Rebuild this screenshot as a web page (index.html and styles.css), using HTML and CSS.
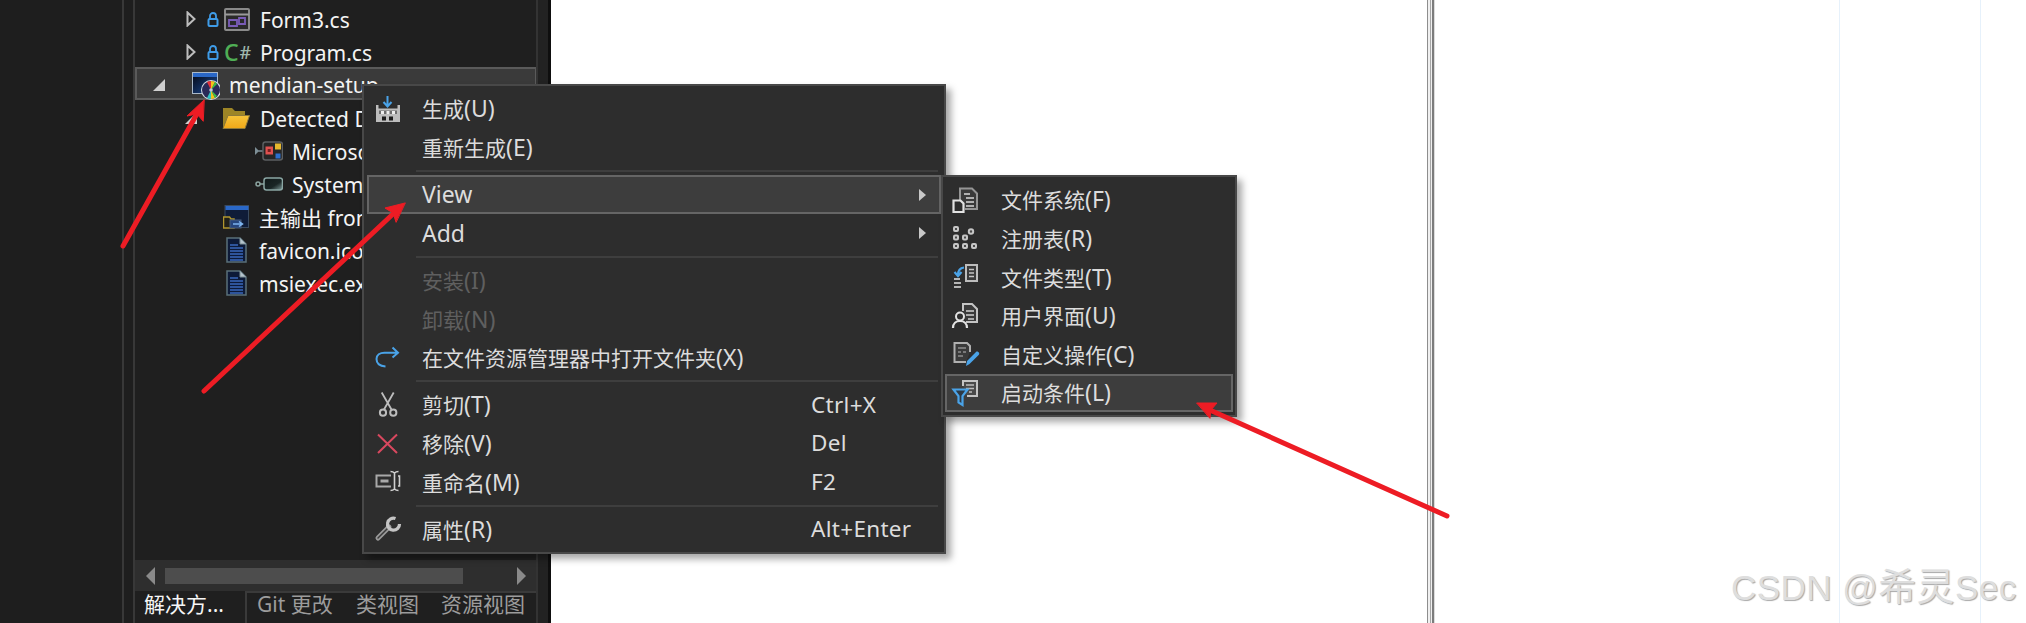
FILE: index.html
```html
<!DOCTYPE html>
<html lang="zh">
<head>
<meta charset="utf-8">
<title>mendian-setup</title>
<link rel="stylesheet" href="styles.css">
</head>
<body>
<div class="screen">
  <div class="gutter gutter-a"></div>
  <div class="gutter gutter-b"></div>
  <section class="panel">
    <div class="tree">
      <div class="row pad-file">
        <span class="slot s-chev"><svg width="10" height="16" viewBox="0 0 10 16"><path d="M1.5 1.5 8.5 8 1.5 14.5z" fill="none" stroke="#bdbdbd" stroke-width="2"/></svg></span>
        <span class="slot s-lock"><svg width="12" height="15" viewBox="0 0 12 15"><path d="M3 7V4a3 3 0 0 1 6 0v3" fill="none" stroke="#3f9ce8" stroke-width="1.8"/><rect x="1.5" y="7" width="9" height="7" rx="1" fill="none" stroke="#3f9ce8" stroke-width="2"/></svg></span>
        <span class="slot s-icon"><svg width="26" height="23" viewBox="0 0 26 23"><rect x="1" y="1" width="24" height="21" rx="1" fill="#2a2a2a" stroke="#8a8a8a" stroke-width="2"/><path d="M1 6.500h24" stroke="#9a9a9a" stroke-width="2"/><path d="M5 12h8v6H5zM15 10h6v6h-6z" fill="none" stroke="#7a5cb8" stroke-width="1.800"/></svg></span>
        <span class="name">Form3.cs</span>
      </div>
      <div class="row pad-file">
        <span class="slot s-chev"><svg width="10" height="16" viewBox="0 0 10 16"><path d="M1.5 1.5 8.5 8 1.5 14.5z" fill="none" stroke="#bdbdbd" stroke-width="2"/></svg></span>
        <span class="slot s-lock"><svg width="12" height="15" viewBox="0 0 12 15"><path d="M3 7V4a3 3 0 0 1 6 0v3" fill="none" stroke="#3f9ce8" stroke-width="1.8"/><rect x="1.5" y="7" width="9" height="7" rx="1" fill="none" stroke="#3f9ce8" stroke-width="2"/></svg></span>
        <span class="slot s-icon csharp"><b class="cs-c">C</b><b class="cs-h">#</b></span>
        <span class="name">Program.cs</span>
      </div>
      <div class="row row-selected pad-project">
        <span class="slot s-exp-p"><svg width="12" height="12" viewBox="0 0 12 12"><path d="M0 12 12 12 12 0z" fill="#cfcfcf"/></svg></span>
        <span class="slot s-proj"><svg width="28" height="30" viewBox="0 0 28 30"><defs><linearGradient id="scr" x1="0" y1="0" x2="1" y2="1"><stop offset="0" stop-color="#04060f"/><stop offset="1" stop-color="#1d4f9e"/></linearGradient></defs><rect x="0.500" y="2.500" width="25" height="21" fill="url(#scr)" stroke="#a9b8c8"/><rect x="1" y="3" width="24" height="4" fill="#2a68c8"/><circle cx="19" cy="20" r="10" fill="#d4dce4"/><circle cx="19" cy="20" r="9" fill="#2a2a58"/><path d="M19 20 15 12A9 9 0 0 1 19 11z" fill="#e6303a"/><path d="M19 20V11A9 9 0 0 1 23 12z" fill="#f1c21b"/><path d="M19 20 23 12A9 9 0 0 1 25 14z" fill="#3cc04a"/><path d="M19 20 15 28A9 9 0 0 0 19 29z" fill="#2ec4c4"/><path d="M19 20V29A9 9 0 0 0 23 28z" fill="#f1c21b"/><path d="M19 20 23 28A9 9 0 0 0 25 26z" fill="#3cc04a"/><circle cx="19" cy="20" r="1.800" fill="#bfc8d2"/></svg></span>
        <span class="name">mendian-setup</span>
      </div>
      <div class="row pad-dep">
        <span class="slot s-exp-d"><svg width="12" height="12" viewBox="0 0 12 12"><path d="M0 12 12 12 12 0z" fill="#cfcfcf"/></svg></span>
        <span class="slot s-folder"><svg width="28" height="22" viewBox="0 0 28 22"><defs><linearGradient id="fold" x1="0" y1="0" x2="0" y2="1"><stop offset="0" stop-color="#f6c43a"/><stop offset="1" stop-color="#f0a818"/></linearGradient></defs><path d="M1 1h9l3 3h10v5H6L1 21z" fill="#9d8526"/><path d="M6 8.500h21.500L23 21.500H1z" fill="url(#fold)" stroke="#8e7a3a"/></svg></span>
        <span class="name">Detected Dependencies</span>
      </div>
      <div class="row pad-asm">
        <span class="slot s-asm"><svg width="28" height="20" viewBox="0 0 28 20"><path d="M0 7l3 3-3 3zM3 10h5" fill="#7e8f96" stroke="#7e8f96" stroke-width="1.500"/><rect x="8" y="1" width="19.500" height="18" rx="2.500" fill="#262626" stroke="#5c5f61" stroke-width="1.500"/><rect x="10.500" y="5.500" width="7.500" height="8" fill="#e0514f"/><rect x="12.700" y="8" width="3" height="3" fill="#7a2020"/><rect x="20" y="2.500" width="6" height="6" fill="#e6b82e"/><rect x="20.500" y="12.500" width="5" height="5" fill="#2b6fcf"/></svg></span>
        <span class="name">Microsoft .NET Framework</span>
      </div>
      <div class="row pad-asm">
        <span class="slot s-asm"><svg width="28" height="14" viewBox="0 0 28 14"><defs><linearGradient id="sysb" x1="0" y1="0" x2="1" y2="1"><stop offset="0" stop-color="#101818"/><stop offset=".6" stop-color="#1a2626"/><stop offset="1" stop-color="#7f9c9a"/></linearGradient></defs><circle cx="3" cy="7" r="2" fill="none" stroke="#8aa39f" stroke-width="1.500"/><path d="M5 7h4" stroke="#8aa39f" stroke-width="1.500"/><rect x="9" y="1" width="18.500" height="12" rx="2.500" fill="url(#sysb)" stroke="#8aa6a4" stroke-width="1.500"/></svg></span>
        <span class="name">System.Windows.Forms</span>
      </div>
      <div class="row pad-output">
        <span class="slot s-out"><svg width="26" height="24" viewBox="0 0 26 24"><rect x="2" y="0.500" width="23.500" height="22" fill="#0f1c38" stroke="#3a4a5e"/><rect x="2.500" y="1" width="23" height="4" fill="#2a68c8"/><path d="M0.500 12h6l1.500 2h3v9H0.500z" fill="#20201a" stroke="#b0952e" stroke-width="1.500"/><rect x="7" y="15" width="11" height="8" fill="#27467e" stroke="#4a5d7a"/><path d="M10 19h9M16 16.500 19.500 19 16 21.500" fill="none" stroke="#7db4ef" stroke-width="1.500"/></svg></span>
        <span class="name"><span class="cjk">主输出</span> from mendian</span>
      </div>
      <div class="row pad-doc">
        <span class="slot s-doc"><svg width="21" height="26" viewBox="0 0 21 26"><path d="M1 1h13l6 6v18H1z" fill="#0d1a38" stroke="#59707a" stroke-width="1.500"/><path d="M14 1v6h6" fill="#b5c4cc" stroke="#7d8f96"/><path d="M4 8h8M4 11h13M4 14h13M4 17h13M4 20h13M4 23h13" stroke="#3a68bc" stroke-width="1.600"/></svg></span>
        <span class="name">favicon.ico</span>
      </div>
      <div class="row pad-doc">
        <span class="slot s-doc"><svg width="21" height="26" viewBox="0 0 21 26"><path d="M1 1h13l6 6v18H1z" fill="#0d1a38" stroke="#59707a" stroke-width="1.500"/><path d="M14 1v6h6" fill="#b5c4cc" stroke="#7d8f96"/><path d="M4 8h8M4 11h13M4 14h13M4 17h13M4 20h13M4 23h13" stroke="#3a68bc" stroke-width="1.600"/></svg></span>
        <span class="name">msiexec.exe</span>
      </div>
    </div>
    <div class="hscroll">
      <svg class="sb-arrow" width="9" height="18" viewBox="0 0 9 18"><path d="M9 0v18L0 9z" fill="#8a8a8a"/></svg>
      <div class="sb-track"><div class="sb-thumb"></div></div>
      <svg class="sb-arrow" width="9" height="18" viewBox="0 0 9 18"><path d="M0 0v18L9 9z" fill="#8a8a8a"/></svg>
    </div>
    <div class="tabs">
      <span class="tab tab-active">解决方...</span>
      <div class="tab-rest">
        <span class="tab tab-git">Git 更改</span>
        <span class="tab tab-cls">类视图</span>
        <span class="tab tab-res">资源视图</span>
      </div>
    </div>
  </section>
  <div class="panel-edge"></div>
  <main class="doc">
    <div class="doc-left"></div>
    <div class="splitter"></div>
    <div class="doc-col doc-col-a"></div>
    <div class="doc-col doc-col-b"></div>
    <div class="doc-col doc-col-c"></div>
  </main>
</div>

<nav class="menu menu-main">
  <div class="item">
    <span class="ico"><svg width="26" height="26" viewBox="0 0 26 26"><path d="M1 9h2.500v3.500h19V9H25v17H1z" fill="#bdbdbd"/><path d="M12.500 0v9M8.500 6l4 4.500 4-4.500" fill="none" stroke="#4aa3e8" stroke-width="2"/><path d="M4 14.500h18v3.500H4z" fill="#6d6d6d"/><path d="M6 15h3v3H6zM11.500 15h3v3h-3zM17 15h3v3h-3z" fill="#ededed"/><path d="M7 20.500h4v4H7zM14 20.500h4v4h-4z" fill="#1d1d1d"/></svg></span>
    <span class="label">生成<span class="key">(U)</span></span><span class="end"></span>
  </div>
  <div class="item">
    <span class="ico"></span>
    <span class="label">重新生成<span class="key">(E)</span></span><span class="end"></span>
  </div>
  <div class="sep"></div>
  <div class="item item-hot">
    <span class="ico"></span>
    <span class="label key">View</span>
    <span class="end end-arrow"><svg width="7" height="12" viewBox="0 0 7 12"><path d="M0 0l7 6-7 6z" fill="#c8c8c8"/></svg></span>
  </div>
  <div class="item">
    <span class="ico"></span>
    <span class="label key">Add</span>
    <span class="end end-arrow"><svg width="7" height="12" viewBox="0 0 7 12"><path d="M0 0l7 6-7 6z" fill="#c8c8c8"/></svg></span>
  </div>
  <div class="sep"></div>
  <div class="item item-off">
    <span class="ico"></span>
    <span class="label">安装<span class="key">(I)</span></span><span class="end"></span>
  </div>
  <div class="item item-off">
    <span class="ico"></span>
    <span class="label">卸载<span class="key">(N)</span></span><span class="end"></span>
  </div>
  <div class="item">
    <span class="ico"><svg width="26" height="26" viewBox="0 0 26 26"><path d="M10.500 21.500C4 21 1.500 17.500 1.500 14 1.500 10 5 7.700 9.500 7.700H22.500M17.500 2.500 23 7.700 17.500 12.500" fill="none" stroke="#4aa3e8" stroke-width="2"/></svg></span>
    <span class="label">在文件资源管理器中打开文件夹<span class="key">(X)</span></span><span class="end"></span>
  </div>
  <div class="sep"></div>
  <div class="item">
    <span class="ico"><svg width="26" height="26" viewBox="0 0 26 26"><path d="M6.700 .5 16.500 17.500M18.700 .5 9 17.500" fill="none" stroke="#bdbdbd" stroke-width="1.800"/><circle cx="8" cy="20.700" r="3.100" fill="none" stroke="#bdbdbd" stroke-width="2"/><circle cx="18.300" cy="20.700" r="3.100" fill="none" stroke="#bdbdbd" stroke-width="2"/></svg></span>
    <span class="label">剪切<span class="key">(T)</span></span><span class="end">Ctrl+X</span>
  </div>
  <div class="item">
    <span class="ico"><svg width="26" height="26" viewBox="0 0 26 26"><path d="M3 3.500 22 22M22 3.500 3 22" fill="none" stroke="#d9485f" stroke-width="2"/></svg></span>
    <span class="label">移除<span class="key">(V)</span></span><span class="end">Del</span>
  </div>
  <div class="item">
    <span class="ico"><svg width="26" height="26" viewBox="0 0 26 26"><path d="M16 6.500H1.500v11H16" fill="none" stroke="#a8a8a8" stroke-width="2"/><path d="M5.500 10.500h8v3h-8z" fill="#a8a8a8"/><path d="M15.500 2.500c2 0 3 .5 4 1.500 1-1 2-1.500 4-1.500M19.500 4v16M15.500 21.500c2 0 3-.5 4-1.500 1 1 2 1.500 4 1.500M23 7h1.500v10H23" fill="none" stroke="#d0d0d0" stroke-width="1.600"/></svg></span>
    <span class="label">重命名<span class="key">(M)</span></span><span class="end">F2</span>
  </div>
  <div class="sep"></div>
  <div class="item">
    <span class="ico"><svg width="26" height="26" viewBox="0 0 26 26"><path d="M3 22 14 11" stroke="#9a9a9a" stroke-width="5" stroke-linecap="round"/><path d="M3 22 14 11" stroke="#3a3a3a" stroke-width="1.500" stroke-linecap="round"/><path d="M20.500 2.500A6 6 0 1 0 24.500 8" fill="none" stroke="#c4c4c4" stroke-width="3.200"/></svg></span>
    <span class="label">属性<span class="key">(R)</span></span><span class="end">Alt+Enter</span>
  </div>
</nav>

<nav class="menu menu-sub">
  <div class="item">
    <span class="ico"><svg width="26" height="26" viewBox="0 0 26 26"><path d="M8 13V1.500h12l5 5v15.500H13" fill="#3a3a3a" stroke="#959595" stroke-width="2"/><path d="M12 7h6M14 11h8M14 15h8M14 19h8" stroke="#b0b0b0" stroke-width="2"/><path d="M1.500 13.500h7l3 3v8.500h-10z" fill="#2d2d2d" stroke="#e2e2e2" stroke-width="2.200"/></svg></span>
    <span class="label">文件系统<span class="key">(F)</span></span>
  </div>
  <div class="item">
    <span class="ico"><svg width="26" height="26" viewBox="0 0 26 26"><g fill="#4a4a4a" stroke="#c6c6c6" stroke-width="2"><rect x="2" y="1" width="4" height="4" rx="1"/><rect x="2" y="9.500" width="4" height="4" rx="1"/><rect x="11" y="9.500" width="4" height="4" rx="1"/><rect x="2" y="18" width="4" height="4" rx="1"/><rect x="11" y="18" width="4" height="4" rx="1"/><rect x="20" y="18" width="4" height="4" rx="1"/><circle cx="19" cy="5.500" r="2.200"/></g></svg></span>
    <span class="label">注册表<span class="key">(R)</span></span>
  </div>
  <div class="item">
    <span class="ico"><svg width="26" height="26" viewBox="0 0 26 26"><rect x="14" y="1" width="11" height="16" fill="#3a3a3a" stroke="#bdbdbd" stroke-width="2"/><path d="M17 5.500h5M17 9h5M17 12.500h5" stroke="#c4c4c4" stroke-width="1.500"/><path d="M12 3.500C8 4 6 6.500 6 11M2.500 8 6 12l3.500-4" fill="none" stroke="#4aa3e8" stroke-width="2.200"/><path d="M2 15h6M2 19h7M2 23h7" stroke="#b5b5b5" stroke-width="2"/></svg></span>
    <span class="label">文件类型<span class="key">(T)</span></span>
  </div>
  <div class="item">
    <span class="ico"><svg width="26" height="26" viewBox="0 0 26 26"><path d="M11 8V1h9l5 5v13H14" fill="#3a3a3a" stroke="#c4c4c4" stroke-width="2"/><path d="M14 8h8M14 12h8M16 16h6" stroke="#cfcfcf" stroke-width="1.600"/><circle cx="8" cy="13.500" r="4" fill="#2d2d2d" stroke="#e2e2e2" stroke-width="2"/><path d="M1 25c0-4.500 3-7 7-7s7 2.500 7 7" fill="none" stroke="#e2e2e2" stroke-width="2.200"/></svg></span>
    <span class="label">用户界面<span class="key">(U)</span></span>
  </div>
  <div class="item">
    <span class="ico"><svg width="26" height="26" viewBox="0 0 26 26"><path d="M14 21H2.500V2H15l3 3v6" fill="#3a3a3a" stroke="#b0b0b0" stroke-width="2"/><path d="M6 7h8M6 11h3M11 11h3M6 15h5" stroke="#8e8e8e" stroke-width="1.600"/><path d="M14 25l1-5 9-9c1-1 2.500 0 3 .8s.2 1.700-.6 2.500L17.500 23z" fill="#4aa3e8"/></svg></span>
    <span class="label">自定义操作<span class="key">(C)</span></span>
  </div>
  <div class="item item-hot">
    <span class="ico"><svg width="26" height="26" viewBox="0 0 26 26"><path d="M11 6V1h14v15H15" fill="#4a4a4a" stroke="#c4c4c4" stroke-width="2"/><path d="M14 5h8M14 8.500h8M17 12h3" stroke="#bdbdbd" stroke-width="1.500"/><path d="M1.500 9.500h14L10.500 16v9l-4-2.500V16z" fill="#2e3a46" stroke="#4aa3e8" stroke-width="2.200"/></svg></span>
    <span class="label">启动条件<span class="key">(L)</span></span>
  </div>
</nav>

<svg class="arrows" width="2026" height="623" viewBox="0 0 2026 623">
  <g fill="#ed1c24" stroke="#ed1c24" stroke-linecap="round" stroke-linejoin="round">
    <path d="M123 246 198 112" fill="none" stroke-width="5"/>
    <path d="M204 100 187 116 197 114 203 121z" stroke-width="1"/>
    <path d="M204 391 393 214" fill="none" stroke-width="5"/>
    <path d="M405 203 385 208 393 213 396 222z" stroke-width="1"/>
    <path d="M1447 516 1212 411" fill="none" stroke-width="5"/>
    <path d="M1197 403 1217 403 1211 410 1210 418z" stroke-width="1"/>
  </g>
</svg>

<div class="watermark">CSDN @<span class="wm-cjk">希灵</span>Sec</div>
</body>
</html>
```

FILE: styles.css
```css
* { box-sizing: border-box; }
html, body { margin: 0; padding: 0; width: 2026px; height: 623px; overflow: hidden; background: #fff; }
body { font-family: "Noto Sans", "Noto Sans CJK SC", sans-serif; font-size: 21px; color: #f2f2f2; position: relative; }

.screen { display: flex; width: 2026px; height: 623px; }

.gutter { height: 100%; background: #1e1e1e; border-right: 2px solid #383838; }
.gutter-a { width: 124px; }
.gutter-b { width: 11px; }

.panel { width: 403px; height: 100%; display: flex; flex-direction: column; background: #1f1f1f; border-right: 2px solid #333; }
.panel-edge { width: 13px; height: 100%; background: #222; border-right: 3px solid #0e0e0e; }

.tree { flex: 1; padding-top: 1px; overflow: hidden; }
.row { display: flex; align-items: center; height: 33px; padding-top: 3px; white-space: nowrap; line-height: 1; }
.row-selected { background: #3a3a3a; border: 2px solid #5a5a5a; border-right-width: 1px; padding-top: 1px; }
.slot { display: flex; align-items: center; flex: none; }
.name { color: #f4f4f4; padding-top: 2px; }
.cjk { font-family: "Noto Sans CJK SC", sans-serif; }

.pad-file { padding-left: 51px; }
.pad-project { padding-left: 16px; }
.pad-dep { padding-left: 50px; }
.pad-asm { padding-left: 120px; }
.pad-output { padding-left: 88px; }
.pad-doc { padding-left: 91px; }

.s-chev { width: 21px; }
.s-lock { width: 17px; }
.s-icon { width: 36px; }
.s-exp-p { width: 39px; padding-top: 1px; }
.s-exp-d { width: 37px; }
.s-proj { width: 37px; padding-top: 2px; }
.s-folder { width: 38px; }
.s-asm { width: 37px; }
.s-out { width: 36px; }
.s-doc { width: 33px; }

.csharp { font-family: "Noto Sans", sans-serif; font-size: 23px; line-height: 1; }
.cs-c { color: #4fae55; font-weight: 500; }
.cs-h { color: #9fb8ae; font-weight: 500; font-size: 18px; margin-left: 1px; }

.hscroll { flex: none; height: 31px; background: #2e2e2e; display: flex; align-items: center; padding: 0 10px 0 11px; gap: 10px; }
.sb-track { flex: 1; height: 16px; }
.sb-thumb { width: 298px; height: 16px; background: #4d4d4d; }
.sb-arrow { flex: none; }

.tabs { flex: none; height: 32px; display: flex; font-size: 21px; line-height: 1; white-space: nowrap; }
.tab-active { width: 110px; padding: 3px 0 0 9px; color: #f6f6f6; }
.tab-rest { flex: 1; display: flex; border-top: 2px solid #3a3a3a; border-left: 2px solid #3a3a3a; padding: 1px 0 0 10px; color: #9c9c9c; }
.tab-git { width: 99px; }
.tab-cls { width: 85px; }

.doc { flex: 1; height: 100%; display: flex; background: #fff; }
.doc-left { width: 876px; }
.splitter { width: 8px; height: 100%; background: linear-gradient(90deg, #8e8e8e 0 1.5px, #f0f0f0 1.5px 3px, #a8a8a8 3px 4px, #f0f0f0 4px 5.5px, #7c7c7c 5.5px 7px, #dcdcdc 7px 8px); }
.doc-col { height: 100%; }
.doc-col-a { width: 405px; border-right: 1px solid #e6f1fb; }
.doc-col-b { width: 141px; border-right: 1px solid #e6f1fb; }
.doc-col-c { flex: 1; }

.menu { position: absolute; background: #2d2d2d; border: 2px solid #484848; box-shadow: 5px 5px 7px rgba(0, 0, 0, .35); color: #dcdcdc; line-height: 1; white-space: nowrap; }
.menu-main { left: 362px; top: 84px; width: 584px; padding: 3.7px 3px 3px; }
.menu-sub { left: 941px; top: 175px; width: 296px; padding: 3.7px 2px 2.7px; }

.item { display: flex; align-items: center; height: 38.6px; border: 2px solid transparent; }
.item-hot { background: #3d3d3d; border-color: #656565; }
.item-off { color: #5f5f5f; }
.ico { flex: none; display: flex; align-items: center; width: 53px; height: 26px; padding-left: 5.5px; }
.menu-sub .ico { width: 54px; padding-left: 5px; }
.ico svg { overflow: visible; }
.label { flex: 1; }
.key { font-size: 23px; }
.end { flex: none; width: 128px; font-size: 22.5px; letter-spacing: .3px; }
.end-arrow { display: flex; justify-content: flex-end; padding-right: 13px; }
.sep { height: 2px; margin: 3.3px 3px 3.3px 48.5px; background: #3e3e3e; }

.arrows { position: absolute; left: 0; top: 0; pointer-events: none; }
.watermark { position: absolute; left: 1731px; top: 565px; font-family: "Liberation Sans", "Noto Sans CJK SC", sans-serif; font-size: 35px; line-height: 44px; letter-spacing: .45px; white-space: nowrap; color: #dedede; text-shadow: 1px 1px 1px #a8a8a8; }
.wm-cjk { font-size: 38px; }
```
